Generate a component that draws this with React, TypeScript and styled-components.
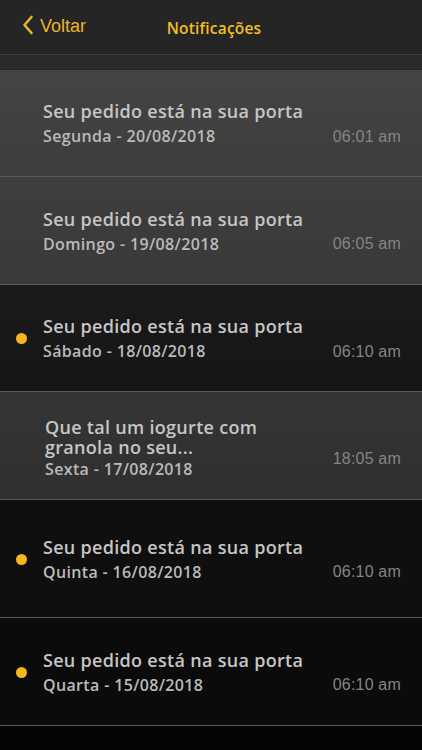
import React from 'react';
import styled, { createGlobalStyle } from 'styled-components';

const GlobalStyle = createGlobalStyle`
  html, body {
    margin: 0;
    padding: 0;
    background: #050505;
  }
  * {
    box-sizing: border-box;
  }
`;

type Notification = {
  title: string;
  date: string;
  time: string;
  unread: boolean;
  bg: string;
  height: number;
};

const notifications: Notification[] = [
  { title: 'Seu pedido está na sua porta', date: 'Segunda - 20/08/2018', time: '06:01 am', unread: false, bg: 'linear-gradient(#444444, #3d3d3d)', height: 107 },
  { title: 'Seu pedido está na sua porta', date: 'Domingo - 19/08/2018', time: '06:05 am', unread: false, bg: 'linear-gradient(#3e3e3e, #393939)', height: 108 },
  { title: 'Seu pedido está na sua porta', date: 'Sábado - 18/08/2018', time: '06:10 am', unread: true, bg: 'linear-gradient(#1b1b1b, #151515)', height: 107 },
  { title: 'Que tal um iogurte com granola no seu...', date: 'Sexta - 17/08/2018', time: '18:05 am', unread: false, bg: 'linear-gradient(#353535, #2f2f2f)', height: 108 },
  { title: 'Seu pedido está na sua porta', date: 'Quinta - 16/08/2018', time: '06:10 am', unread: true, bg: '#0f0f0f', height: 118 },
  { title: 'Seu pedido está na sua porta', date: 'Quarta - 15/08/2018', time: '06:10 am', unread: true, bg: '#0b0b0b', height: 108 },
];

const App = () => {
  return (
    <Screen>
      <GlobalStyle />
      <Header>
        <BackButton>
          <svg width="12" height="20" viewBox="0 0 12 20">
            <path d="M9.5 2 L2.5 10 L9.5 18" fill="none" stroke="#eab42c" strokeWidth="2.6" strokeLinecap="round" strokeLinejoin="round" />
          </svg>
          <span>Voltar</span>
        </BackButton>
        <Title>Notificações</Title>
      </Header>
      <Band />
      <List>
        {notifications.map((n, i) => (
          <Row key={i} $bg={n.bg} $height={n.height}>
            <DotSlot>{n.unread && <Dot />}</DotSlot>
            <TextBlock $wrap={n.title.length > 30}>
              <RowTitle>{n.title}</RowTitle>
              <RowDate>{n.date}</RowDate>
            </TextBlock>
            <Time>{n.time}</Time>
          </Row>
        ))}
      </List>
    </Screen>
  );
};

const Screen = styled.div`
  width: 422px;
  height: 750px;
  overflow: hidden;
  background: #050505;
  display: flex;
  flex-direction: column;
`;

const Header = styled.header`
  height: 55px;
  flex-shrink: 0;
  background: #252525;
  border-bottom: 1px solid #3d3d3d;
  display: flex;
  align-items: center;
  position: relative;
  padding-bottom: 2px;
`;

const BackButton = styled.div`
  display: flex;
  align-items: center;
  gap: 6px;
  padding-left: 22px;
  color: #eab42c;
  font-family: 'Liberation Sans', Arial, sans-serif;
  font-size: 18px;

  svg {
    margin-top: -2px;
  }
`;

const Title = styled.h1`
  position: absolute;
  left: 0;
  right: 0;
  top: 17px;
  margin: 0 auto;
  width: max-content;
  transform: translateX(3px);
  font-family: 'Open Sans', sans-serif;
  font-weight: 600;
  font-size: 15.5px;
  letter-spacing: 0.2px;
  color: #f2bf22;
`;

const Band = styled.div`
  height: 15px;
  flex-shrink: 0;
  background: #2b2b2b;
  border-bottom: 1px solid #262626;
`;

const List = styled.div`
  display: flex;
  flex-direction: column;
`;

const Row = styled.div<{ $bg: string; $height: number }>`
  height: ${({ $height }) => $height}px;
  flex-shrink: 0;
  background: ${({ $bg }) => $bg};
  border-bottom: 1px solid #5a5a5a;
  display: flex;
  align-items: center;
  padding-right: 21px;
`;

const DotSlot = styled.div`
  width: 43px;
  flex-shrink: 0;
  display: flex;
  justify-content: center;
  padding-right: 1px;
  padding-top: 1px;
`;

const Dot = styled.span`
  width: 11px;
  height: 11px;
  border-radius: 50%;
  background: #f7b51f;
`;

const TextBlock = styled.div<{ $wrap: boolean }>`
  flex: 1;
  display: flex;
  flex-direction: column;
  gap: ${({ $wrap }) => ($wrap ? '3px' : '6px')};
  padding-left: ${({ $wrap }) => ($wrap ? '2px' : '0')};
  padding-top: ${({ $wrap }) => ($wrap ? '4px' : '1px')};
  max-width: ${({ $wrap }) => ($wrap ? '228px' : 'none')};
`;

const RowTitle = styled.div`
  font-family: 'Open Sans', sans-serif;
  font-weight: 600;
  font-size: 18px;
  line-height: 20px;
  letter-spacing: 0.3px;
  color: #c6c6c6;
`;

const RowDate = styled.div`
  font-family: 'Open Sans', sans-serif;
  font-weight: 600;
  font-size: 16px;
  line-height: 19px;
  letter-spacing: 0.35px;
  color: #bababa;
`;

const Time = styled.div`
  margin-left: auto;
  margin-top: 27px;
  font-family: 'Liberation Sans', Arial, sans-serif;
  font-size: 16px;
  letter-spacing: 0.2px;
  color: #858585;
  white-space: nowrap;
`;

export default App;
